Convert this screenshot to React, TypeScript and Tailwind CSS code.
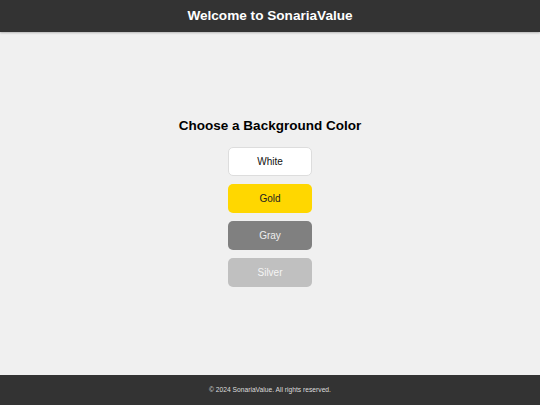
import React, { useState } from "react";

const colors = [
  { name: "White", bg: "bg-white border border-[#dddddd] text-[#111111]" },
  { name: "Gold", bg: "bg-[#ffd700] text-[#222222]" },
  { name: "Gray", bg: "bg-[#808080] text-[#eeeeee]" },
  { name: "Silver", bg: "bg-[#c0c0c0] text-[#f5f5f5]" },
];

const App: React.FC = () => {
  const [picked, setPicked] = useState("");

  return (
    <div className="flex h-[405px] flex-col bg-[#f0f0f0] font-['Liberation_Sans',Arial,sans-serif]">
      {/* Header */}
      <header className="flex h-[32px] shrink-0 items-center justify-center bg-[#333333] shadow-[0_1px_2px_rgba(0,0,0,0.25)]">
        <h1 className="text-[13.6px] font-bold text-white">Welcome to SonariaValue</h1>
      </header>

      {/* Color picker */}
      <main className="flex flex-1 flex-col items-center justify-center pb-[5px]">
        <h2 className="mb-[11px] text-[13.5px] leading-[20px] font-bold text-black">Choose a Background Color</h2>
        <div className="flex flex-col gap-[8px]">
          {colors.map((c) => (
            <button
              key={c.name}
              onClick={() => setPicked(c.name)}
              className={`flex h-[29px] w-[84px] items-center justify-center rounded-[5px] text-[10px] ${c.bg}`}
            >
              {c.name}
            </button>
          ))}
        </div>
      </main>

      {/* Footer */}
      <footer className="flex h-[30px] shrink-0 items-center justify-center bg-[#333333]">
        <p className="text-[6.7px] text-[#dddddd]">© 2024 SonariaValue. All rights reserved.</p>
      </footer>
    </div>
  );
};

export default App;
